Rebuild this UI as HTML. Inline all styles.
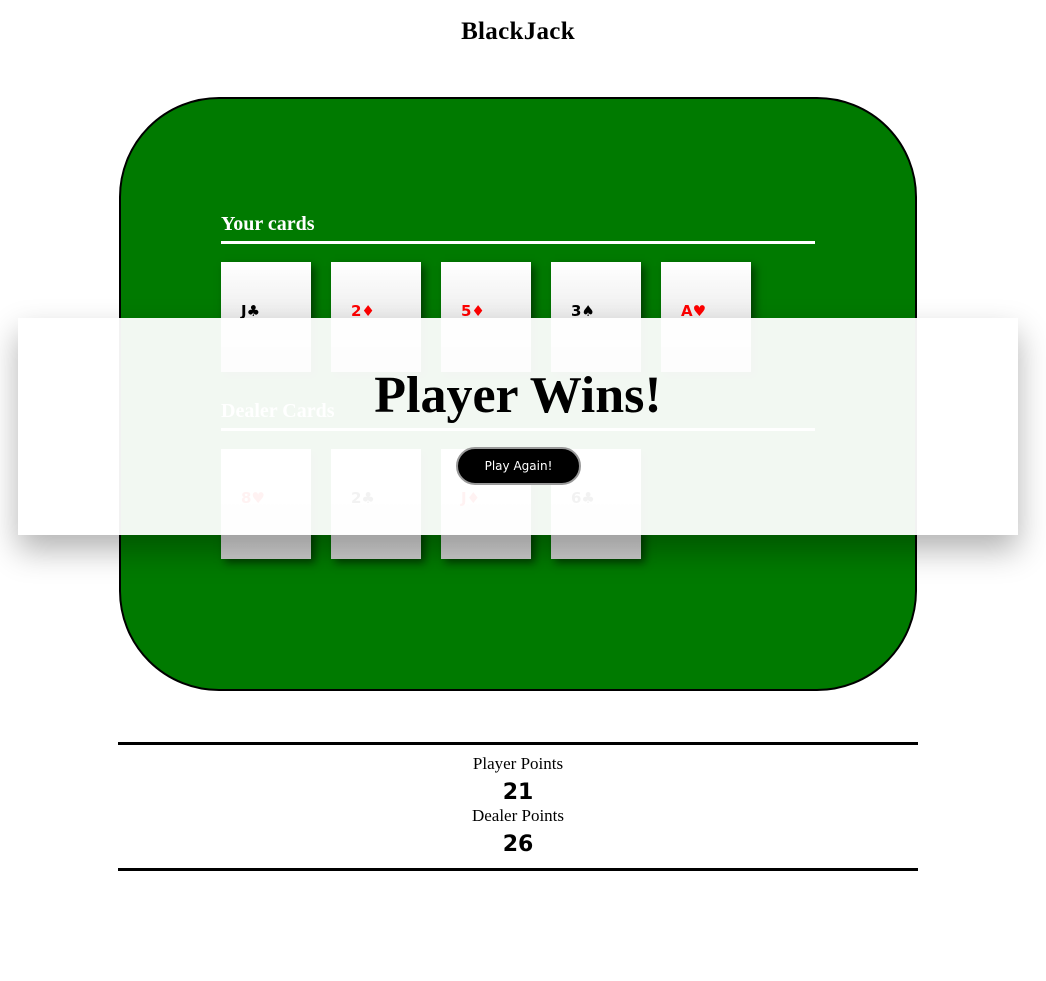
<!DOCTYPE html>
<html><head><meta charset="utf-8">
<style>
html,body{margin:0;padding:0;background:#fff;width:1046px;height:981px;overflow:hidden;position:relative}
body{font-family:"Liberation Serif",serif}
.title{position:absolute;top:16px;left:0;width:1036px;text-align:center;font-weight:bold;font-size:25px;line-height:32px;letter-spacing:0.3px}
.table{position:absolute;left:119px;top:97px;width:794px;height:590px;background:#007a00;border:2.5px solid #000;border-radius:100px}
.h{position:absolute;left:221px;width:594px;color:#fff;font-weight:bold;font-size:20px;border-bottom:3px solid #fff;padding-bottom:4px;line-height:26px}
.card{position:absolute;width:90px;height:110px;background:linear-gradient(#fff 0%,#eee 50%,#ccc 100%);box-shadow:4px 4px 8px rgba(0,0,0,.5);font-family:"DejaVu Sans",sans-serif;font-weight:bold;font-size:15px}
.card span{position:absolute;left:20px;top:40px}
.r{color:#f00}.b{color:#000}
.ov{position:absolute;left:18px;top:318px;width:1000px;height:217px;background:rgba(255,255,255,.95);box-shadow:0 15px 30px rgba(0,0,0,.3)}
.win{position:absolute;top:366px;left:0;width:1036px;text-align:center;font-weight:bold;font-size:52px;line-height:60px}
.btn{position:absolute;left:456px;top:447px;width:125px;height:38px;border-radius:19px;background:#000;color:#fff;border:2px solid #999;box-sizing:border-box;font-family:"DejaVu Sans",sans-serif;font-size:12px;text-align:center;line-height:34px}
.line{position:absolute;left:118px;width:800px;height:3px;background:#000}
.lbl{position:absolute;left:0;width:1036px;text-align:center;font-size:17px}
.num{position:absolute;left:0;width:1036px;text-align:center;font-size:22px;font-weight:bold;font-family:"DejaVu Sans",sans-serif}
</style></head><body>
<div class="title">BlackJack</div>
<div class="table"></div>
<div class="h" style="top:211px">Your cards</div>
<div class="card" style="left:221px;top:262px"><span class="b">J♣</span></div>
<div class="card" style="left:331px;top:262px"><span class="r">2♦</span></div>
<div class="card" style="left:441px;top:262px"><span class="r">5♦</span></div>
<div class="card" style="left:551px;top:262px"><span class="b">3♠</span></div>
<div class="card" style="left:661px;top:262px"><span class="r">A♥</span></div>
<div class="h" style="top:398px">Dealer Cards</div>
<div class="card" style="left:221px;top:449px"><span class="r">8♥</span></div>
<div class="card" style="left:331px;top:449px"><span class="b">2♣</span></div>
<div class="card" style="left:441px;top:449px"><span class="r">J♦</span></div>
<div class="card" style="left:551px;top:449px"><span class="b">6♣</span></div>
<div class="ov"></div>
<div class="win">Player Wins!</div>
<div class="btn">Play Again!</div>
<div class="line" style="top:742px"></div>
<div class="lbl" style="top:754px">Player Points</div>
<div class="num" style="top:780px">21</div>
<div class="lbl" style="top:806px">Dealer Points</div>
<div class="num" style="top:832px">26</div>
<div class="line" style="top:868px"></div>
</body></html>
